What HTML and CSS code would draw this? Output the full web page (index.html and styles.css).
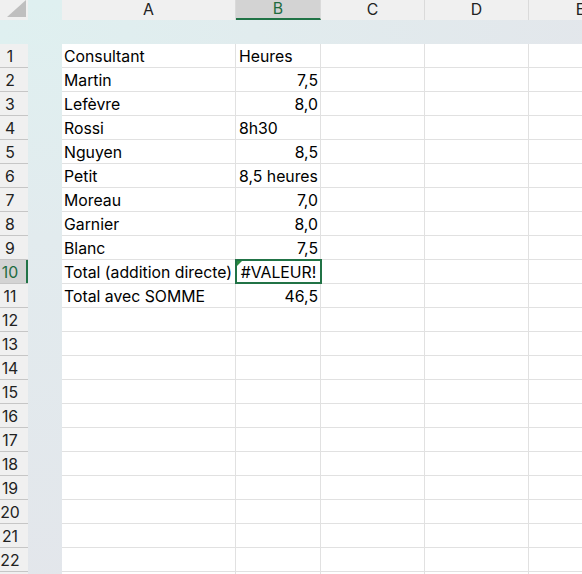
FILE: index.html
```html
<!DOCTYPE html>
<html lang="fr">

<head>
    <meta charset="UTF-8">
    <meta name="viewport" content="width=device-width, initial-scale=1.0">
    <title>Feuille de temps</title>
    <link rel="stylesheet" href="styles.css">
</head>

<body>
    <div class="sheet">
        <div class="corner"><span class="corner-tri"></span></div>
        <div class="strip"></div>
        <div class="band"></div>

        <!-- Column headers -->
        <div class="col-headers">
            <div class="col-head col-a">A</div>
            <div class="col-head col-b active">B</div>
            <div class="col-head col-c">C</div>
            <div class="col-head col-d">D</div>
            <div class="col-head col-e">E</div>
        </div>

        <!-- Row numbers -->
        <div class="row-headers">
            <div class="row-head">1</div>
            <div class="row-head">2</div>
            <div class="row-head">3</div>
            <div class="row-head">4</div>
            <div class="row-head">5</div>
            <div class="row-head">6</div>
            <div class="row-head">7</div>
            <div class="row-head">8</div>
            <div class="row-head">9</div>
            <div class="row-head active">10</div>
            <div class="row-head">11</div>
            <div class="row-head">12</div>
            <div class="row-head">13</div>
            <div class="row-head">14</div>
            <div class="row-head">15</div>
            <div class="row-head">16</div>
            <div class="row-head">17</div>
            <div class="row-head">18</div>
            <div class="row-head">19</div>
            <div class="row-head">20</div>
            <div class="row-head">21</div>
            <div class="row-head">22</div>
            <div class="row-head"></div>
        </div>

        <!-- Cells -->
        <div class="cells">
            <div class="row"><div class="cell col-a">Consultant</div><div class="cell col-b">Heures</div><div class="cell col-c"></div><div class="cell col-d"></div><div class="cell col-e"></div></div>
            <div class="row"><div class="cell col-a">Martin</div><div class="cell col-b num">7,5</div><div class="cell col-c"></div><div class="cell col-d"></div><div class="cell col-e"></div></div>
            <div class="row"><div class="cell col-a">Lefèvre</div><div class="cell col-b num">8,0</div><div class="cell col-c"></div><div class="cell col-d"></div><div class="cell col-e"></div></div>
            <div class="row"><div class="cell col-a">Rossi</div><div class="cell col-b">8h30</div><div class="cell col-c"></div><div class="cell col-d"></div><div class="cell col-e"></div></div>
            <div class="row"><div class="cell col-a">Nguyen</div><div class="cell col-b num">8,5</div><div class="cell col-c"></div><div class="cell col-d"></div><div class="cell col-e"></div></div>
            <div class="row"><div class="cell col-a">Petit</div><div class="cell col-b">8,5 heures</div><div class="cell col-c"></div><div class="cell col-d"></div><div class="cell col-e"></div></div>
            <div class="row"><div class="cell col-a">Moreau</div><div class="cell col-b num">7,0</div><div class="cell col-c"></div><div class="cell col-d"></div><div class="cell col-e"></div></div>
            <div class="row"><div class="cell col-a">Garnier</div><div class="cell col-b num">8,0</div><div class="cell col-c"></div><div class="cell col-d"></div><div class="cell col-e"></div></div>
            <div class="row"><div class="cell col-a">Blanc</div><div class="cell col-b num">7,5</div><div class="cell col-c"></div><div class="cell col-d"></div><div class="cell col-e"></div></div>
            <div class="row"><div class="cell col-a">Total (addition directe)</div><div class="cell col-b error selected">#VALEUR!</div><div class="cell col-c"></div><div class="cell col-d"></div><div class="cell col-e"></div></div>
            <div class="row"><div class="cell col-a">Total avec SOMME</div><div class="cell col-b num">46,5</div><div class="cell col-c"></div><div class="cell col-d"></div><div class="cell col-e"></div></div>
            <div class="row"><div class="cell col-a"></div><div class="cell col-b"></div><div class="cell col-c"></div><div class="cell col-d"></div><div class="cell col-e"></div></div>
            <div class="row"><div class="cell col-a"></div><div class="cell col-b"></div><div class="cell col-c"></div><div class="cell col-d"></div><div class="cell col-e"></div></div>
            <div class="row"><div class="cell col-a"></div><div class="cell col-b"></div><div class="cell col-c"></div><div class="cell col-d"></div><div class="cell col-e"></div></div>
            <div class="row"><div class="cell col-a"></div><div class="cell col-b"></div><div class="cell col-c"></div><div class="cell col-d"></div><div class="cell col-e"></div></div>
            <div class="row"><div class="cell col-a"></div><div class="cell col-b"></div><div class="cell col-c"></div><div class="cell col-d"></div><div class="cell col-e"></div></div>
            <div class="row"><div class="cell col-a"></div><div class="cell col-b"></div><div class="cell col-c"></div><div class="cell col-d"></div><div class="cell col-e"></div></div>
            <div class="row"><div class="cell col-a"></div><div class="cell col-b"></div><div class="cell col-c"></div><div class="cell col-d"></div><div class="cell col-e"></div></div>
            <div class="row"><div class="cell col-a"></div><div class="cell col-b"></div><div class="cell col-c"></div><div class="cell col-d"></div><div class="cell col-e"></div></div>
            <div class="row"><div class="cell col-a"></div><div class="cell col-b"></div><div class="cell col-c"></div><div class="cell col-d"></div><div class="cell col-e"></div></div>
            <div class="row"><div class="cell col-a"></div><div class="cell col-b"></div><div class="cell col-c"></div><div class="cell col-d"></div><div class="cell col-e"></div></div>
            <div class="row"><div class="cell col-a"></div><div class="cell col-b"></div><div class="cell col-c"></div><div class="cell col-d"></div><div class="cell col-e"></div></div>
            <div class="row"><div class="cell col-a"></div><div class="cell col-b"></div><div class="cell col-c"></div><div class="cell col-d"></div><div class="cell col-e"></div></div>
        </div>
    </div>
</body>

</html>
```

FILE: styles.css
```css
/* General Styles */
html,
body {
    margin: 0;
    padding: 0;
    background: #fff;
}

body {
    font-family: Inter, "Liberation Sans", Arial, sans-serif;
    font-size: 15.8px;
    color: #000;
}

/* Sheet layout */
.sheet {
    width: 582px;
    height: 574px;
    overflow: hidden;
    display: grid;
    grid-template-columns: 28px 34px 1fr;
    grid-template-rows: 20px 24px 1fr;
}

.corner {
    grid-column: 1;
    grid-row: 1;
    background: #f0f0f0;
    position: relative;
}

.corner-tri {
    position: absolute;
    left: 7px;
    top: 0;
    width: 19px;
    height: 17px;
    background: #bfbfbf;
    clip-path: polygon(100% 0, 100% 100%, 0 100%);
}

.strip {
    grid-column: 2;
    grid-row: 1 / 4;
    background: linear-gradient(to bottom, #dff0f0 0%, #e2ebee 40%, #e3e6eb 100%);
}

.band {
    grid-column: 1 / 4;
    grid-row: 2;
    background: linear-gradient(to right, #dff0f0 0%, #e1ecee 40%, #e3e6eb 100%);
}

/* Column headers */
.col-headers {
    grid-column: 3;
    grid-row: 1;
    display: flex;
    background: #f0f0f0;
}

.col-head {
    flex: none;
    box-sizing: border-box;
    height: 20px;
    line-height: 20px;
    text-align: center;
    border-right: 1px solid #dadada;
    color: #222;
}

.col-head.active {
    background: #d3d3d3;
    color: #1e6b3e;
    border-bottom: 2px solid #217346;
    line-height: 18px;
}

.col-a { width: 174px; }
.col-b { width: 85px; }
.col-c { width: 104px; }
.col-d { width: 104px; }
.col-e { width: 104px; }

/* Row headers */
.row-headers {
    grid-column: 1;
    grid-row: 3;
    background: #f0f0f0;
}

.row-head {
    box-sizing: border-box;
    height: 24px;
    line-height: 24px;
    padding-top: 1px;
    padding-right: 8px;
    text-align: center;
    border-bottom: 1px solid #c6c6c6;
    color: #222;
    overflow: hidden;
}

.row-head.active {
    background: #d3d3d3;
    color: #1e6b3e;
    box-shadow: inset -2px 0 0 #217346;
}

/* Cells */
.cells {
    grid-column: 3;
    grid-row: 3;
}

.row {
    display: flex;
    height: 24px;
}

.cell {
    flex: none;
    box-sizing: border-box;
    height: 24px;
    line-height: 21px;
    padding: 2px 2px 0;
    border-right: 1px solid #e1e1e1;
    border-bottom: 1px solid #e1e1e1;
    white-space: nowrap;
}

.cell.col-b {
    padding-left: 3px;
}

.num {
    text-align: right;
}

.error {
    text-align: center;
}

.selected {
    position: relative;
}

.selected::before {
    content: "";
    position: absolute;
    left: 1px;
    top: 1px;
    width: 0;
    height: 0;
    border-top: 5px solid #2b8a3e;
    border-right: 5px solid transparent;
}

.selected::after {
    content: "";
    position: absolute;
    left: -1px;
    right: -2px;
    top: -1px;
    bottom: -1px;
    border: 2px solid #217346;
    pointer-events: none;
}
```
